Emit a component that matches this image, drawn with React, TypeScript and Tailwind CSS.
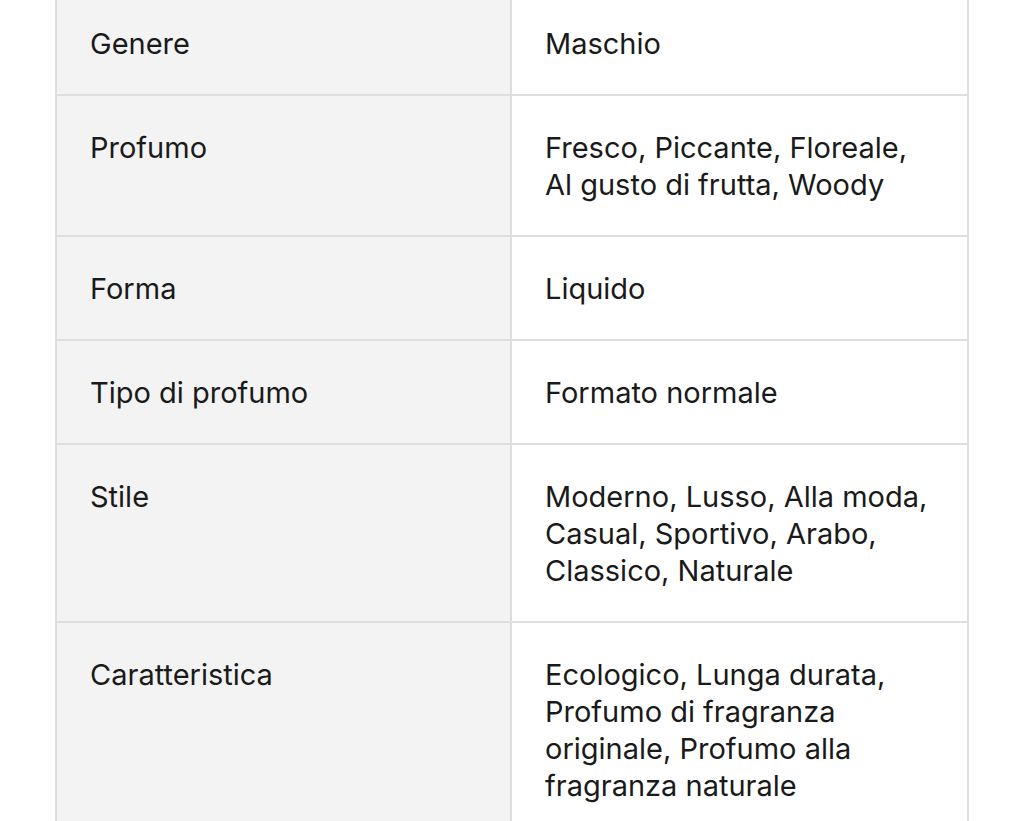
import React from "react";

interface SpecRow {
  label: string;
  value: string[];
}

const rows: SpecRow[] = [
  { label: "Genere", value: ["Maschio"] },
  { label: "Profumo", value: ["Fresco, Piccante, Floreale,", "Al gusto di frutta, Woody"] },
  { label: "Forma", value: ["Liquido"] },
  { label: "Tipo di profumo", value: ["Formato normale"] },
  {
    label: "Stile",
    value: ["Moderno, Lusso, Alla moda,", "Casual, Sportivo, Arabo,", "Classico, Naturale"],
  },
  {
    label: "Caratteristica",
    value: [
      "Ecologico, Lunga durata,",
      "Profumo di fragranza",
      "originale, Profumo alla",
      "fragranza naturale",
    ],
  },
];

const App: React.FC = () => {
  return (
    <div
      className="h-[821px] overflow-hidden bg-white"
      style={{ fontFamily: "Inter, 'Noto Sans', sans-serif" }}
    >
      <div className="mx-[55px] -mt-[8px] border-x-2 border-[#dedede] text-[29px] leading-[37px] text-[#1a1a1a]">
        {rows.map((row) => (
          <div key={row.label} className="grid grid-cols-2 border-b-2 border-[#dedede]">
            <div className="bg-[#f3f3f3] border-r-2 border-[#dedede] px-[33px] pt-[33px] pb-[32px]">
              {row.label}
            </div>
            <div className="bg-white px-[33px] pt-[33px] pb-[32px]">
              {row.value.map((line) => (
                <div key={line}>{line}</div>
              ))}
            </div>
          </div>
        ))}
      </div>
    </div>
  );
};

export default App;
